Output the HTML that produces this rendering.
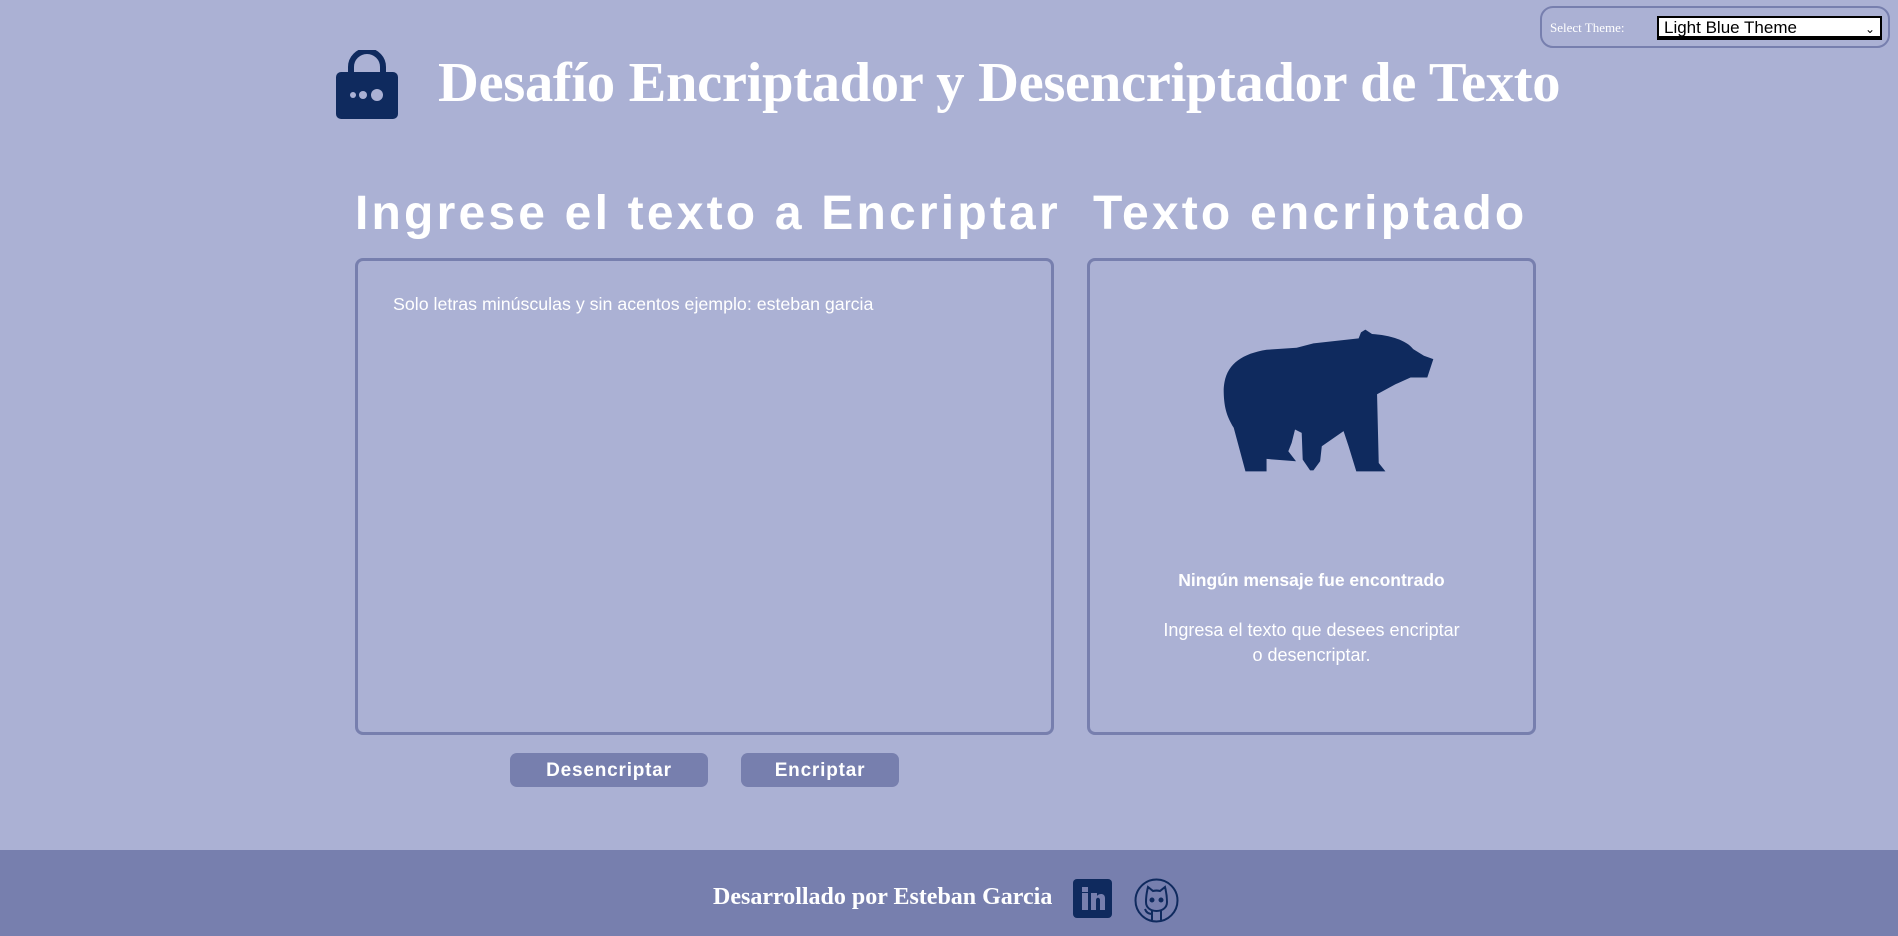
<!DOCTYPE html>
<html><head><meta charset="utf-8"><style>
*{margin:0;padding:0;box-sizing:border-box}
body{width:1898px;height:936px;background:#abb1d4;position:relative;overflow:hidden;font-family:"Liberation Sans",sans-serif;color:#fff}
.abs{position:absolute}
.theme{left:1540px;top:6px;width:350px;height:42px;border:2px solid #777fae;border-radius:13px}
.theme span{position:absolute;left:8px;top:12px;font:13px "Liberation Serif",serif;color:#fff}
.sel{position:absolute;left:115px;top:8px;width:225px;height:24px;background:#fff;border:2px solid #000;color:#000;font:17px "Liberation Sans",sans-serif;padding-left:5px;line-height:20px;box-shadow:inset 0 -2px 0 #000}
.sel i{position:absolute right:5px;position:absolute;right:5px;top:1px;font-style:normal;font-size:12px}
h1{position:absolute;left:438px;top:51px;font:bold 56.5px "Liberation Serif",serif;white-space:nowrap;letter-spacing:-0.3px}
h2{position:absolute;top:186px;font:48px "Liberation Sans",sans-serif;white-space:nowrap;letter-spacing:3.2px;font-weight:bold}
.box{position:absolute;top:258px;height:477px;border:3.5px solid #777fae;border-radius:8px}
.ph{left:393px;top:294px;font-size:17.8px}
.btn{position:absolute;top:753px;height:34px;background:#777fae;border-radius:7px;font-weight:bold;font-size:19px;text-align:center;line-height:36px;letter-spacing:.8px}
.footer{left:0;top:850px;width:1898px;height:86px;background:#777fae}
</style></head><body>
<div class="abs theme"><span>Select Theme:</span><div class="sel">Light Blue Theme<i>&#8964;</i></div></div>
<svg class="abs" style="left:335px;top:50px" width="64" height="70" viewBox="0 0 64 70">
<path d="M16 24V17A16 16 0 0 1 48 17V24" fill="none" stroke="#0f2a5e" stroke-width="6"/>
<rect x="1" y="22" width="62" height="47" rx="5" fill="#0f2a5e"/>
<circle cx="18" cy="45" r="3" fill="#abb1d4"/><circle cx="28" cy="45" r="4" fill="#abb1d4"/><circle cx="42" cy="45" r="6" fill="#abb1d4"/>
</svg>
<h1>Desafío Encriptador y Desencriptador de Texto</h1>
<h2 style="left:355px">Ingrese el texto a Encriptar</h2>
<h2 style="left:1093px">Texto encriptado</h2>
<div class="box" style="left:355px;width:699px"></div>
<div class="abs ph">Solo letras minúsculas y sin acentos ejemplo: esteban garcia</div>
<div class="box" style="left:1087px;width:449px"></div>
<svg class="abs" style="left:1223px;top:329px" width="211" height="144" viewBox="430 240 630 430">
<path fill="#0f2a5e" d="M497 665L462 535C440 500 432 470 432 420C435 350 480 315 560 302L650 296L700 283L835 268L842 250L855 242L875 255C920 258 975 270 998 300L1030 320L1058 330L1040 385L990 385L945 405L890 435L895 640L915 665L828 665L805 590L790 545L725 590L720 635L700 662L690 662L668 630L665 550L645 540L635 580L625 605L648 635L560 628L560 665Z"/>
</svg>
<div class="abs" style="left:1087px;width:449px;top:570px;text-align:center;font-weight:bold;font-size:17.5px">Ningún mensaje fue encontrado</div>
<div class="abs" style="left:1087px;width:449px;top:618px;text-align:center;font-size:18px;line-height:25px">Ingresa el texto que desees encriptar<br>o desencriptar.</div>
<div class="btn" style="left:510px;width:198px">Desencriptar</div>
<div class="btn" style="left:741px;width:158px">Encriptar</div>
<div class="abs footer"></div>
<div class="abs" style="left:713px;top:884px;font:bold 24px 'Liberation Serif',serif;white-space:nowrap">Desarrollado por Esteban Garcia</div>
<svg class="abs" style="left:1073px;top:879px" width="39" height="39" viewBox="0 0 39 39">
<rect width="39" height="39" rx="4" fill="#0f2a5e"/>
<rect x="9" y="14" width="6" height="17" fill="#777fae"/><rect x="9" y="8" width="6" height="5" fill="#777fae"/>
<path d="M18 31V14H24V17C26 14 32 14 32 19V31H27V21C27 18 23 18 23 21V31Z" fill="#777fae"/>
</svg>
<svg class="abs" style="left:1134px;top:878px" width="45" height="45" viewBox="0 0 45 45" fill="none" stroke="#0f2a5e" stroke-width="2">
<circle cx="22.5" cy="22.5" r="21"/>
<path d="M12 24C12 17 13 13 14 9L19 13C21 12.5 24 12.5 26 13L31 9C32 13 33 17 33 24C33 30 28 33 22.5 33C17 33 12 30 12 24Z"/>
<circle cx="18" cy="22" r="1.5" fill="#0f2a5e"/><circle cx="27" cy="22" r="1.5" fill="#0f2a5e"/>
<path d="M18 33V42M27 33V42M18 36C14 36 12 34 11 31"/>
</svg>
</body></html>
